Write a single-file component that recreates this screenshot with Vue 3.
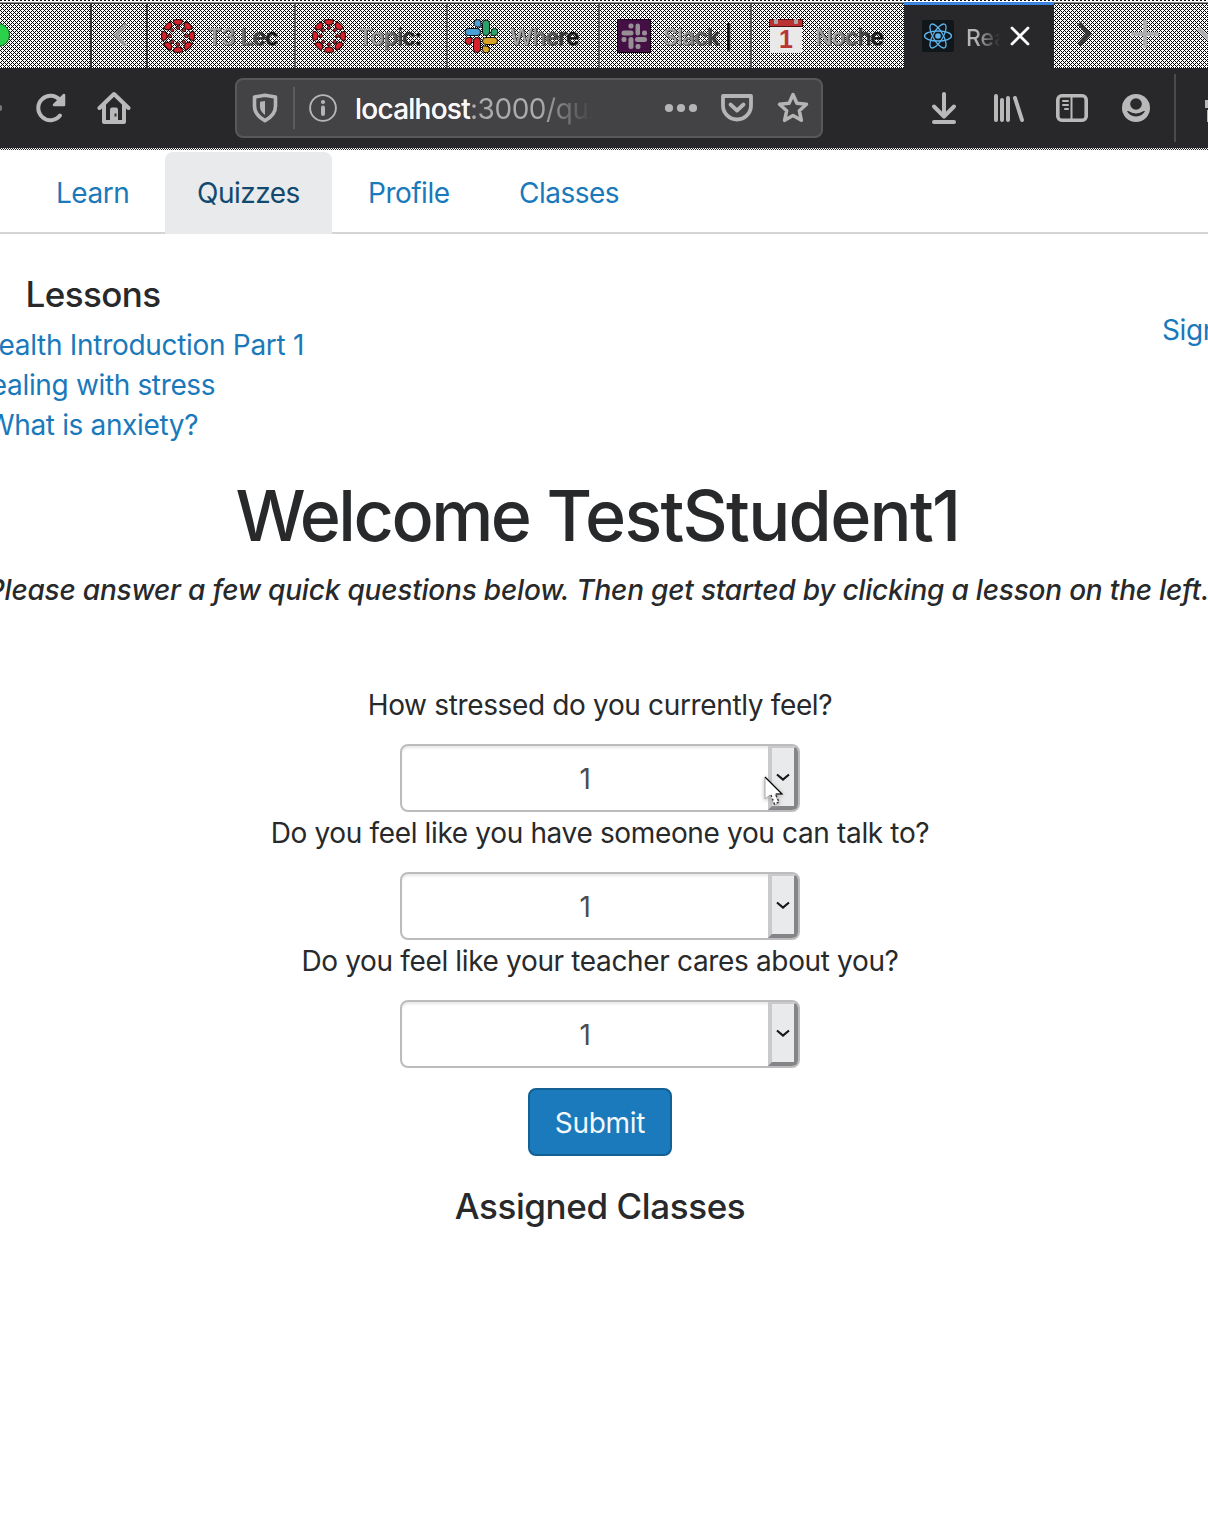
<script setup>
const tabs = [
  { icon: 'canvas', title: 'T3 Lec', cls: 't1' },
  { icon: 'canvas', title: 'Topic:', cls: 't2' },
  { icon: 'slack', title: 'Where', cls: 't3' },
  { icon: 'slackApp', title: 'Slack |', cls: 't4' },
  { icon: 'calendar', title: 'Noche', cls: 't5' },
]
const questions = [
  { text: 'How stressed do you currently feel?', cls: 'q1' },
  { text: 'Do you feel like you have someone you can talk to?', cls: 'q2' },
  { text: 'Do you feel like your teacher cares about you?', cls: 'q3' },
]
const spokes = [0, 45, 90, 135, 180, 225, 270, 315]
</script>

<template>
  <div class="screen">
    <div class="tabbar">
      <div class="window-end"><i class="zoom-dot"></i></div>
      <div class="scroll-left">
        <svg width="18" height="28" viewBox="0 0 18 28"><path d="M15 3 5 14l10 11" fill="none" stroke="#9c9c9e" stroke-width="4" /></svg>
      </div>
      <div v-for="t in tabs" :key="t.title" class="tab" :class="t.cls">
        <svg v-if="t.icon === 'canvas'" class="fav" viewBox="0 0 34 34">
          <g v-for="a in spokes" :key="a" :transform="`rotate(${a} 17 17)`">
            <path d="M12.200 1.200Q17-.2 21.800 1.200L20.600 5Q17 7.600 13.400 5z" fill="#d8222b" stroke="#180405" stroke-width="1" />
            <circle cx="17" cy="8.800" r="1.700" fill="#c3262c" stroke="#180405" stroke-width=".8" />
          </g>
        </svg>
        <svg v-else-if="t.icon === 'slack'" class="fav" viewBox="0 0 34 34" stroke="#111" stroke-width="1">
          <path d="M10 4a3.500 3.500 0 1 1 7 0v4h-3.500A3.500 3.500 0 0 1 10 4z" fill="#4a9fd8" />
          <rect x="1" y="9.500" width="15.500" height="7" rx="3.500" fill="#4a9fd8" />
          <rect x="18.500" y="1" width="7" height="15.500" rx="3.500" fill="#2aa36b" />
          <path d="M27 16.500V13a3.500 3.500 0 1 1 3.500 3.500z" fill="#2aa36b" />
          <rect x="18.500" y="18.500" width="15" height="7" rx="3.500" fill="#d9a324" />
          <path d="M18.500 27H22a3.500 3.500 0 1 1-3.500 3.500z" fill="#d9a324" />
          <rect x="9.500" y="18.500" width="7" height="15" rx="3.500" fill="#d8222b" />
          <path d="M8 18.500V22a3.500 3.500 0 1 1-3.500-3.500z" fill="#d8222b" />
        </svg>
        <svg v-else-if="t.icon === 'slackApp'" class="fav" viewBox="0 0 34 34">
          <rect x=".5" y=".5" width="33" height="33" fill="#440f45" stroke="#160316" />
          <g fill="#969096">
            <rect x="11.500" y="4.500" width="5" height="5" rx="2" />
            <rect x="4.500" y="11.500" width="12" height="5" rx="2.500" />
            <rect x="18.500" y="4.500" width="4.500" height="12" rx="2.200" />
            <rect x="25" y="11.500" width="5" height="5" rx="2" />
            <rect x="18" y="18" width="12" height="5" rx="2.500" />
            <rect x="18.500" y="25" width="5" height="5" rx="2" />
            <rect x="11.500" y="18" width="5" height="12" rx="2.500" />
            <rect x="4.500" y="18" width="5" height="5" rx="2" />
          </g>
        </svg>
        <svg v-else class="fav" viewBox="0 0 34 34">
          <rect x="1" y="6" width="32" height="28" fill="#e9e9ea" />
          <rect x=".5" y=".5" width="33" height="7" fill="#bb3030" stroke="#481010" />
          <rect x="5" y="0" width="4" height="5" rx="1" fill="#aaa" />
          <rect x="25" y="0" width="4" height="5" rx="1" fill="#aaa" />
          <text x="17" y="29" text-anchor="middle" font-family="Liberation Sans, sans-serif" font-weight="700" font-size="25" fill="#b93434">1</text>
        </svg>
        <span class="tab-title">{{ t.title }}</span>
      </div>
      <div class="tab active">
        <svg class="react" viewBox="0 0 32 32">
          <rect width="32" height="32" rx="2" fill="#11161a" />
          <g fill="none" stroke="#5db4ee" stroke-width="1.300">
            <ellipse cx="16" cy="16" rx="13.500" ry="5" />
            <ellipse cx="16" cy="16" rx="13.500" ry="5" transform="rotate(60 16 16)" />
            <ellipse cx="16" cy="16" rx="13.500" ry="5" transform="rotate(120 16 16)" />
          </g>
          <circle cx="16" cy="16" r="2.800" fill="#5db4ee" />
        </svg>
        <span class="tab-title">Rea</span>
        <svg class="close" width="22" height="22" viewBox="0 0 22 22"><path d="m3 3 16 16M19 3 3 19" stroke="#fafafa" stroke-width="2.800" stroke-linecap="round" /></svg>
      </div>
      <div class="tab-tools">
        <svg width="18" height="28" viewBox="0 0 18 28"><path d="m3 3 9.500 11L3 25" fill="none" stroke="#39393b" stroke-width="4.500" /></svg>
        <svg width="28" height="28" viewBox="0 0 28 28"><path d="M14 0v28M0 14h28" stroke="#adadaf" stroke-width="4" /></svg>
        <svg class="list" width="28" height="28" viewBox="0 0 28 28"><path d="m2 8 12 12L26 8" fill="none" stroke="#adadaf" stroke-width="4" /></svg>
      </div>
    </div>

    <div class="toolbar">
      <i class="forward"></i>
      <svg class="reload" width="32" height="32" viewBox="0 0 32 32" fill="none" stroke="#b9b9ba" stroke-width="4" stroke-linecap="round" stroke-linejoin="round">
        <path d="M25.200 8.600A12.200 12.200 0 1 0 25 23.600" /><path d="M29 3v10H19z" fill="#b9b9ba" stroke-width="2.500" />
      </svg>
      <svg class="home" width="34" height="34" viewBox="0 0 34 34">
        <path d="M2.500 17 17 3l14.500 14M7 14v17h20V14" fill="none" stroke="#b9b9ba" stroke-width="4" stroke-linecap="round" stroke-linejoin="round" />
        <path d="M13 31V18.500q0-2 2-2h4q2 0 2 2V31z" fill="#b9b9ba" /><rect x="17.500" y="22.500" width="2" height="3" fill="#333" />
      </svg>
      <div class="urlbar">
        <svg class="shield" width="26" height="30" viewBox="0 0 26 30">
          <path d="M13 2.300 23.500 4v9q0 9-10.500 14.700Q2.500 22 2.500 13V4z" fill="none" stroke="#b5b5b6" stroke-width="3.600" stroke-linejoin="round" />
          <path d="M13 8v14Q8 18.500 8 13.500V8.800z" fill="#b5b5b6" />
        </svg>
        <i class="url-sep"></i>
        <svg class="info" width="28" height="28" viewBox="0 0 28 28"><circle cx="14" cy="14" r="12.900" fill="none" stroke="#b5b5b6" stroke-width="1.900" /><circle cx="14" cy="8" r="2.100" fill="#b5b5b6" /><path d="M14 13.500V20" stroke="#b5b5b6" stroke-width="4" stroke-linecap="round" /></svg>
        <div class="url"><b>localhost</b>:3000/qui</div>
        <svg class="dots" width="34" height="10" viewBox="0 0 34 10" fill="#b5b5b6"><circle cx="5" cy="5" r="4.100" /><circle cx="17" cy="5" r="4.100" /><circle cx="29" cy="5" r="4.100" /></svg>
        <svg class="pocket" width="34" height="30" viewBox="0 0 34 30" fill="none" stroke="#b5b5b6" stroke-width="3.800" stroke-linecap="round" stroke-linejoin="round"><path d="M3 3h28v9.500a14 14 0 0 1-28 0z" /><path d="m10.500 11.500 6.500 6 6.500-6" /></svg>
        <svg class="star" width="34" height="34" viewBox="0 0 34 34"><path d="m17 3.500 3.900 8.800 9.600 1-7.200 6.400 2.100 9.600L17 24.400l-8.400 4.900 2.100-9.600-7.200-6.400 9.600-1z" fill="none" stroke="#b5b5b6" stroke-width="3.500" stroke-linejoin="round" /></svg>
      </div>
      <div class="actions">
        <svg width="26" height="34" viewBox="0 0 26 34" fill="none" stroke="#b9b9ba" stroke-width="4" stroke-linecap="round" stroke-linejoin="round"><path d="M13 3v22M3 15.500l10 10 10-10M3 31h20" /></svg>
        <svg width="32" height="32" viewBox="0 0 32 32" fill="none" stroke="#b9b9ba" stroke-width="4" stroke-linecap="round"><path d="M3 4v24M9 8v20M15 6v22M22 6l7 22" /></svg>
        <svg width="32" height="28" viewBox="0 0 32 28" fill="none" stroke="#b9b9ba" stroke-linecap="round"><rect x="1.800" y="1.800" width="28.400" height="24.400" rx="4" stroke-width="3.600" /><path d="M15.500 2v24" stroke-width="2" /><path d="M7 7h5M7 11h5M9 15h3" stroke-width="2" /></svg>
        <svg width="28" height="28" viewBox="0 0 28 28"><circle cx="14" cy="14" r="14" fill="#b9b9ba" /><circle cx="14" cy="10" r="5.800" fill="#2a2a2c" /><path d="M5 17q2.200-.2 3.200.8 5.800 3.400 11.600 0 1-1 3.200-.8-2.500 5.400-9 5.400T5 17z" fill="#2a2a2c" /><path d="M7.500 16.300q6.500 4.200 13 0" fill="none" stroke="#b9b9ba" stroke-width="1.600" /></svg>
      </div>
      <i class="tool-sep"></i>
      <svg class="gift" width="6" height="28" viewBox="0 0 6 28"><path d="M6 6H1v8h5zM6 16H3v12h3z" fill="#b9b9ba" /></svg>
    </div>

    <div class="page">
      <nav class="nav">
        <a class="n1">Learn</a><a class="n2">Quizzes</a><a class="n3">Profile</a><a class="n4">Classes</a>
      </nav>
      <div class="top">
        <div class="lessons">
          <h4>Lessons</h4>
          <a class="l1">Health Introduction Part 1</a>
          <a class="l2">Dealing with stress</a>
          <a class="l3">What is anxiety?</a>
        </div>
        <a class="sign">Sign</a>
      </div>
      <main>
        <h1><span class="greet">Welcome</span> TestStudent1</h1>
        <h5>Please answer a few quick questions below. Then get started by clicking a lesson on the left.</h5>
        <div v-for="q in questions" :key="q.cls" class="question">
          <label :class="q.cls">{{ q.text }}</label>
          <div class="select">
            <span class="value">1</span>
            <span class="arrow"><svg width="14" height="10" viewBox="0 0 14 10"><path d="m1 1.500 6 5 6-5" fill="none" stroke="#16181a" stroke-width="2.200" /></svg></span>
          </div>
        </div>
        <button class="submit">Submit</button>
        <h4 class="assigned">Assigned Classes</h4>
      </main>
    </div>
    <svg class="cursor" width="24" height="34" viewBox="0 0 24 34">
      <path d="M2 2v22l5-4 4 10 5-2-4-9h7z" fill="#fff" stroke="#aaa" stroke-width="1" />
      <path d="m2 2 17 17h-6" fill="none" stroke="#000" stroke-width="1.200" />
      <path d="m8 20 3.500 9 4.500-2-3.500-8" fill="none" stroke="#222" stroke-width="1.200" stroke-dasharray="2 2" />
    </svg>
  </div>
</template>

<style>
body { background: #fff; }
</style>

<style scoped>
.screen { position: relative; width: 1208px; height: 1514px; overflow: hidden; background: #fff; font-family: Inter, "Liberation Sans", sans-serif; color: #27292b; }
.screen * { box-sizing: border-box; }
.tabbar {
  display: flex; height: 68px; padding-top: 4px;
  background:
    linear-gradient(#8e8e91, #8e8e91) 0 2px / 100% 1px no-repeat,
    linear-gradient(#333, #333) 0 3px / 100% 1px no-repeat,
    linear-gradient(#fff, #fff) 0 1px / 100% 1px no-repeat,
    repeating-linear-gradient(90deg, #111 0 2px, #fff 2px 4px) 0 0 / 100% 1px no-repeat,
    conic-gradient(from 270deg at 1px 1px, #fff 25%, transparent 0) 0 0 / 4px 4px,
    conic-gradient(from 270deg at 1px 1px, #fff 25%, transparent 0) 2px 2px / 4px 4px,
    repeating-conic-gradient(#fff 0 25%, #000 0 50%) 0 0 / 2px 2px;
}
.window-end { width: 92px; border-right: 2px solid #38383a; display: flex; align-items: center; }
.zoom-dot { width: 24px; height: 24px; margin: 0 0 2px -14px; border-radius: 50%; background: #2bd14b; border: 1px solid #126020; }
.scroll-left { width: 56px; border-right: 2px solid #38383a; padding: 17px 0 0 19px; }
.tab { display: flex; border-right: 2px solid #58585a; padding: 15px 0 0 13px; height: 64px; }
.t1 { width: 148px; }
.t2, .t3, .t4 { width: 152px; padding-left: 16px; }
.t5 { width: 152px; padding-left: 17px; border: 0; }
.t4 { padding-left: 17px; }
.fav { width: 34px; height: 34px; flex: none; }
.tab-title { margin: 4px 0 0 12px; font-size: 23px; letter-spacing: -.8px; line-height: 28px; font-weight: 500; white-space: nowrap; height: 30px; background: linear-gradient(90deg, #a4a4a6 30%, #111 92%); background-clip: text; -webkit-background-clip: text; color: transparent; filter: drop-shadow(1px 0 0 #222a) drop-shadow(0 1px 0 #2228); }
.active { width: 150px; background: #28282a; border: 0; border-top: 3px solid #3a85e2; height: 66px; margin-top: -2px; padding: 15px 0 0 18px; }
.react { width: 32px; height: 32px; flex: none; }
.active .tab-title { width: 34px; overflow: hidden; margin: 4px 0 0 12px; filter: none; letter-spacing: 0; background-image: linear-gradient(90deg, #b5b5b6 30%, #29292b 100%); }
.close { margin: 5px 0 0 9px; }
.tab-tools { display: flex; padding: 16px 0 0 22px; gap: 37px; width: 154px; overflow: hidden; }
.tab-tools svg { flex: none; }
.toolbar { display: flex; align-items: center; height: 82px; padding-bottom: 2px; background: repeating-linear-gradient(90deg, #222 0 1px, #fff 1px 2px) 0 80px / 100% 1px no-repeat, repeating-linear-gradient(90deg, #fff 0 1px, #222 1px 2px) 0 81px / 100% 1px no-repeat, #28282a; }
.toolbar svg { flex: none; display: block; }
.forward { flex: none; width: 2px; height: 6px; background: #777; border-radius: 0 3px 3px 0; }
.reload { margin-left: 33px; }
.home { margin-left: 30px; }
.urlbar { width: 588px; flex: none; height: 60px; margin-left: 104px; border: 2px solid #58585a; border-radius: 8px; background: #434345; display: flex; align-items: center; }
.shield { margin-left: 15px; }
.url-sep { width: 2px; height: 42px; background: #5c5c5e; margin: 0 14px 0 15px; flex: none; }
.url { margin-left: 18px; flex: none; width: 242px; height: 38px; padding-top: 1px; line-height: 38px; font-size: 28px; letter-spacing: -.45px; overflow: hidden; white-space: nowrap; background: linear-gradient(90deg, #acacad 76%, #434345 98%); background-clip: text; -webkit-background-clip: text; color: transparent; }
.url b { font-weight: 500; color: #f9f9fa; letter-spacing: -.75px; }
.dots { margin-left: 67px; }
.pocket { margin-left: 22px; }
.star { margin-left: 22px; }
.actions { display: flex; align-items: center; flex: none; margin-left: 108px; width: 219px; gap: 36px; }
.actions svg:nth-child(3) { margin-left: -5px; }
.actions svg:nth-child(4) { margin-left: -2px; }
.tool-sep { width: 2px; height: 68px; flex: none; background: #4b4b4d; margin-left: 24px; }
.gift { margin-left: 28px; }
.page { padding-top: 2px; font-size: 28px; letter-spacing: -.35px; }
.nav { display: flex; height: 82px; background: linear-gradient(#d5d5d6, #d5d5d6) 0 80px / 100% 2px no-repeat; letter-spacing: -.5px; }
.nav a { line-height: 82px; padding: 0 0 0 32px; height: 82px; color: #1a79ba; border-radius: 8px 8px 0 0; white-space: nowrap; }
.nav .n1 { margin-left: 24px; width: 141px; }
.nav .n2 { width: 167px; background: #e8eaeb; color: #11496f; }
.nav .n3 { width: 150px; padding-left: 36px; }
.nav .n4 { padding-left: 37px; }
.top { display: flex; justify-content: space-between; height: 246px; padding-top: 38px; }
.lessons { display: flex; flex-direction: column; align-items: flex-start; }
h1, h4, h5 { margin: 0; font-weight: 500; white-space: nowrap; }
h4 { font-size: 35px; line-height: 44px; letter-spacing: -.4px; }
.lessons h4 { margin: 0 0 9px 25.5px; letter-spacing: -.6px; }
.lessons a { line-height: 40px; color: #1a79ba; white-space: nowrap; }
.l1 { margin-left: -22px; letter-spacing: -.3px; }
.l2 { margin-left: -29px; }
.l3 { margin-left: -13px; }
.sign { width: 46px; margin-top: 36px; line-height: 44px; color: #1a79ba; white-space: nowrap; }
main { width: 1200px; display: flex; flex-direction: column; align-items: center; }
h1 { font-size: 70px; line-height: 76px; letter-spacing: -1.700px; margin: -2px 5px 2px 0; }
.greet { letter-spacing: -2.500px; }
h5 { font-size: 28px; line-height: 40px; font-style: italic; letter-spacing: -.2px; margin: 14px 4px 74px 0; }
.question { height: 128px; display: flex; flex-direction: column; align-items: center; white-space: nowrap; }
.question label { line-height: 43px; height: 60px; }
.select { width: 400px; height: 68px; border: 2px solid #bcbcbe; border-radius: 8px; display: flex; overflow: hidden; color: #4b4d4f; box-shadow: inset 0 3px 3px -1px #e7e7e8; }
.value { flex: 1; text-align: center; line-height: 67px; }
.arrow { width: 30px; background: #e8eaeb; border: 4px solid; border-width: 2px 4px 4px; border-color: #cacacc #858587 #858587 #cacacc; display: flex; justify-content: center; align-items: center; padding-top: 2px; }
.submit { width: 144px; height: 68px; margin-top: 20px; padding: 2px 0 0; border: 2px solid #145f94; border-radius: 8px; background: #1a7abc; color: #f4f8fb; font: 28px Inter, sans-serif; letter-spacing: -.3px; }
.assigned { margin-top: 28px; }
.cursor { position: absolute; left: 763px; top: 775px; filter: drop-shadow(0 1px 2px #aaa); }
</style>
